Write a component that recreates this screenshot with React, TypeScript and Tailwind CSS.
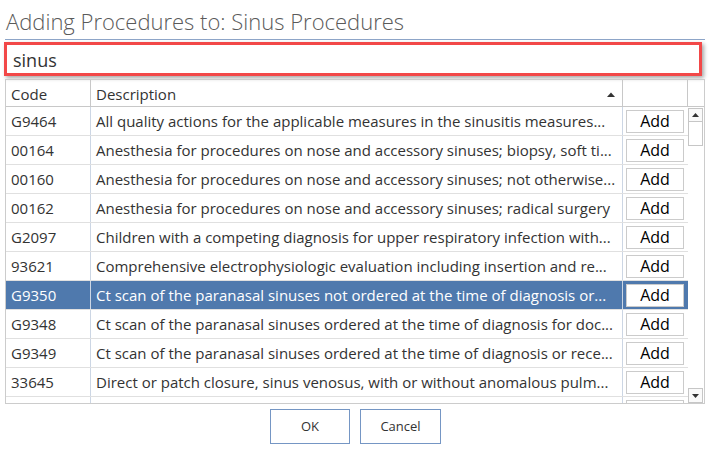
import React from "react";

const rows: { code: string; desc: string }[] = [
  { code: "G9464", desc: "All quality actions for the applicable measures in the sinusitis measures..." },
  { code: "00164", desc: "Anesthesia for procedures on nose and accessory sinuses; biopsy, soft ti..." },
  { code: "00160", desc: "Anesthesia for procedures on nose and accessory sinuses; not otherwise..." },
  { code: "00162", desc: "Anesthesia for procedures on nose and accessory sinuses; radical surgery" },
  { code: "G2097", desc: "Children with a competing diagnosis for upper respiratory infection with..." },
  { code: "93621", desc: "Comprehensive electrophysiologic evaluation including insertion and re..." },
  { code: "G9350", desc: "Ct scan of the paranasal sinuses not ordered at the time of diagnosis or..." },
  { code: "G9348", desc: "Ct scan of the paranasal sinuses ordered at the time of diagnosis for doc..." },
  { code: "G9349", desc: "Ct scan of the paranasal sinuses ordered at the time of diagnosis or rece..." },
  { code: "33645", desc: "Direct or patch closure, sinus venosus, with or without anomalous pulm..." },
];

function Row({ code, desc, selected }: { code: string; desc: string; selected?: boolean }) {
  return (
    <div
      className={
        "flex h-[29px] border-b border-[#e0e0e0] " +
        (selected ? "bg-[#4f79ad] text-white" : "text-[#333333]")
      }
    >
      <div className="w-[85px] shrink-0 border-r border-[#ccd6e4] pl-[5px] flex items-center">{code}</div>
      <div className="w-[532px] shrink-0 border-r border-[#ccd6e4] pl-[5px] flex items-center overflow-hidden whitespace-nowrap">
        {desc}
      </div>
      <div className="w-[64px] shrink-0 flex items-center pl-[3px]">
        <div className="w-[58px] h-[23px] bg-white border border-[#cbcbcb] text-black text-[16px] flex items-center justify-center">
          Add
        </div>
      </div>
    </div>
  );
}

export default function App() {
  return (
    <div
      className="w-[710px] h-[453px] bg-white overflow-hidden"
      style={{ fontFamily: '"Open Sans", "Noto Sans", sans-serif' }}
    >
      <div className="ml-[5px] w-[700px] h-[40px] border-b border-[#8ea6c9] pl-[1px] pt-[7px] text-[22px] leading-[28px] text-[#5a5a5a] font-light">
        Adding Procedures to: Sinus Procedures
      </div>
      <div className="ml-[4px] mt-[2px] w-[698px] h-[34px] border-[3px] border-[#f24848] shadow-[2px_2px_4px_rgba(0,0,0,0.35)] pl-[6px] pt-[2px] flex items-center text-[18px] text-[#333333]">
        sinus
      </div>
      <div className="ml-[5px] mt-[3px] w-[700px] h-[325px] border border-[#cccccc] text-[15px] overflow-hidden">
        <div className="flex h-[27px] border-b border-[#c8c8c8] text-[#333333]">
          <div className="w-[85px] shrink-0 border-r border-[#c8c8c8] pl-[5px] pt-[2px] flex items-center">Code</div>
          <div className="w-[532px] shrink-0 border-r border-[#c8c8c8] pl-[5px] pr-[7px] pt-[2px] flex items-center justify-between">
            <span>Description</span>
            <svg width="8" height="5" viewBox="0 0 8 5">
              <path d="M0 5 L4 0.5 L8 5 Z" fill="#333" />
            </svg>
          </div>
          <div className="w-[65px] shrink-0 border-r border-[#c8c8c8]" />
          <div className="flex-1" />
        </div>
        <div className="flex h-[296px]">
          <div className="w-[682px] shrink-0 overflow-hidden">
            {rows.map((r, i) => (
              <Row key={r.code} code={r.code} desc={r.desc} selected={i === 6} />
            ))}
            <div className="flex h-[29px]">
              <div className="w-[85px] shrink-0 border-r border-[#ccd6e4]" />
              <div className="w-[532px] shrink-0 border-r border-[#ccd6e4]" />
              <div className="w-[64px] shrink-0 pl-[3px] pt-[3px]">
                <div className="w-[58px] h-[23px] border border-[#cbcbcb]" />
              </div>
            </div>
          </div>
          <div className="flex-1 flex flex-col justify-between pt-[1px] pb-[0px] pr-[1px]">
            <div className="flex flex-col">
              <div className="h-[14px] w-[15px] border border-[#c6c6c6] bg-[#fafafa] flex items-center justify-center">
                <svg width="7" height="4" viewBox="0 0 7 4">
                  <path d="M0 4 L3.5 0 L7 4 Z" fill="#333" />
                </svg>
              </div>
              <div className="h-[24px] w-[15px] border border-t-0 border-[#c6c6c6] bg-white" />
            </div>
            <div className="h-[15px] w-[15px] border border-[#c6c6c6] bg-[#fafafa] flex items-center justify-center">
              <svg width="7" height="4" viewBox="0 0 7 4">
                <path d="M0 0 L3.5 4 L7 0 Z" fill="#333" />
              </svg>
            </div>
          </div>
        </div>
      </div>
      <div className="flex justify-center gap-[10px] mt-[5px] pl-[1px]">
        <div className="w-[80px] h-[35px] border border-[#7596c4] flex items-center justify-center text-[13px] text-[#333333]">
          OK
        </div>
        <div className="w-[81px] h-[35px] border border-[#7596c4] flex items-center justify-center text-[13px] text-[#333333]">
          Cancel
        </div>
      </div>
    </div>
  );
}
